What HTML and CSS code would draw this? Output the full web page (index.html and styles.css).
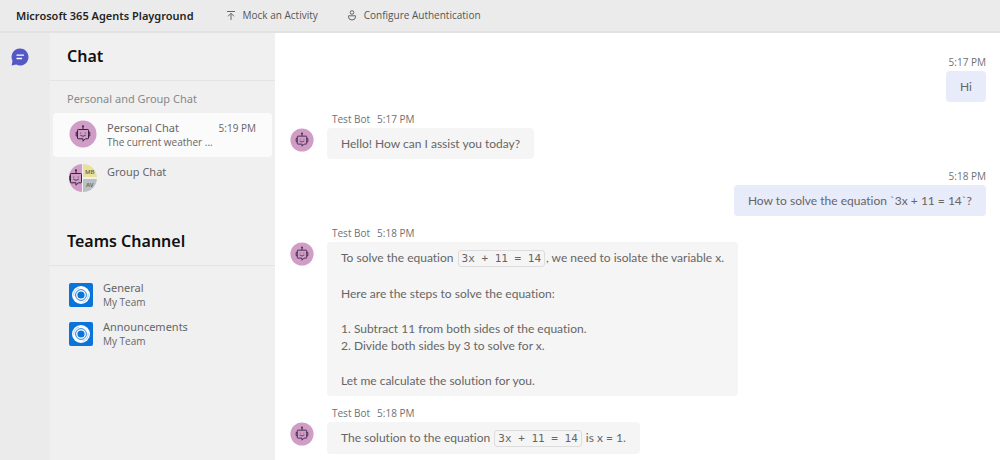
FILE: index.html
```
<!DOCTYPE html>
<html lang="en">
<head>
<meta charset="utf-8">
<meta name="viewport" content="width=device-width, initial-scale=1">
<title>Microsoft 365 Agents Playground</title>
<link rel="stylesheet" href="styles.css">
</head>
<body>
<svg width="0" height="0" class="sprite" aria-hidden="true">
  <symbol id="bot" viewBox="0 0 28 28">
    <circle cx="14" cy="14" r="13.5" fill="#cf9dc6"/>
    <g fill="none" stroke="#3a2240" stroke-width="1">
      <path d="M9.2 9.5h9.6q.7 0 .7.7v7.9q0 .7-.7.7h-2.4L14 21.2v-2.4H9.2q-.7 0-.7-.7v-7.9q0-.7.7-.7z"/>
      <path d="M14 9.4V6.6M8.6 12.2H7.2v3.8h1.4M19.4 12.2h1.4v3.8h-1.4"/>
      <path d="M11.3 15.2q2.7 2.2 5.4 0" stroke-width=".8"/>
    </g>
    <circle cx="14" cy="6.3" r="1" fill="#3a2240"/>
    <circle cx="11.8" cy="12.9" r=".5" fill="#3a2240"/>
    <circle cx="16.2" cy="12.9" r=".5" fill="#3a2240"/>
  </symbol>
  <symbol id="channel" viewBox="0 0 24 24">
    <rect width="24" height="24" rx="2" fill="#0b74da"/>
    <circle cx="12" cy="12" r="9" fill="#fff"/>
    <circle cx="12" cy="12" r="5.4" fill="none" stroke="#0b74da" stroke-width=".9"/>
    <path d="M4.8 13a7.2 7.2 0 0 1 5.2-8M19.2 11a7.2 7.2 0 0 1-5.2 8" fill="none" stroke="#6faeea" stroke-width=".6"/>
    <circle cx="12" cy="12" r="3.6" fill="#0b74da"/>
  </symbol>
</svg>

<header class="topbar">
  <h1 class="brand">Microsoft 365 Agents Playground</h1>
  <button class="action" type="button">
    <svg class="action-icon" viewBox="0 0 12 12" aria-hidden="true"><path d="M2 1.5h8M6 10V3.5M3 6.3l3-3 3 3"/></svg>
    Mock an Activity
  </button>
  <button class="action" type="button">
    <svg class="action-icon" viewBox="0 0 12 12" aria-hidden="true"><circle cx="6" cy="2.5" r="1.8"/><path d="M2.5 5.8h7v1a3.5 3.2 0 0 1-7 0z"/></svg>
    Configure Authentication
  </button>
</header>

<div class="app">
  <nav class="rail" aria-label="Apps">
    <button class="rail-button" type="button" aria-label="Chat">
      <svg class="rail-icon" viewBox="0 0 18 18" aria-hidden="true"><path d="M9 .5a8.5 8.5 0 1 1-3.8 16.1L.6 17.4l.9-4.5A8.5 8.5 0 0 1 9 .5z" fill="#5458c5"/><path d="M6 7.2h6.5M6 10.5h4.5" stroke="#fff" stroke-width="1.3" stroke-linecap="round"/></svg>
    </button>
  </nav>

  <aside class="panel">
    <h2 class="panel-title">Chat</h2>
    <h3 class="panel-label">Personal and Group Chat</h3>
    <ul class="chats">
      <li>
        <button class="chat selected" type="button">
          <svg class="avatar-large" aria-hidden="true"><use href="#bot"/></svg>
          <span class="item-text">
            <span class="item-row"><span class="item-name">Personal Chat</span><time class="item-time">5:19 PM</time></span>
            <span class="item-detail">The current weather ...</span>
          </span>
        </button>
      </li>
      <li>
        <button class="chat" type="button">
          <svg class="avatar-large" viewBox="0 0 28 28" aria-hidden="true">
            <defs>
              <clipPath id="round"><circle cx="14" cy="14" r="14"/></clipPath>
              <clipPath id="left"><path d="M0 0h13v28H0z"/></clipPath>
            </defs>
            <g clip-path="url(#round)">
              <g clip-path="url(#left)">
                <path d="M0 0h13v28H0z" fill="#cf9dc6"/>
                <use href="#bot" x="-7" width="28" height="28"/>
              </g>
              <path d="M14 0h14v13H14z" fill="#ecdf9c"/>
              <path d="M14 15h14v13H14z" fill="#b7c0c7"/>
              <text class="initials" x="16" y="10">MB</text>
              <text class="initials" x="17" y="23">AV</text>
            </g>
          </svg>
          <span class="item-text"><span class="item-name">Group Chat</span></span>
        </button>
      </li>
    </ul>
    <h2 class="panel-title">Teams Channel</h2>
    <ul class="channels">
      <li>
        <button class="channel" type="button">
          <svg class="channel-icon" aria-hidden="true"><use href="#channel"/></svg>
          <span class="item-text"><span class="item-name">General</span><span class="item-detail">My Team</span></span>
        </button>
      </li>
      <li>
        <button class="channel" type="button">
          <svg class="channel-icon" aria-hidden="true"><use href="#channel"/></svg>
          <span class="item-text"><span class="item-name">Announcements</span><span class="item-detail">My Team</span></span>
        </button>
      </li>
    </ul>
  </aside>

  <main class="conversation">
    <article class="message mine">
      <div class="meta"><time>5:17 PM</time></div>
      <div class="bubble"><p>Hi</p></div>
    </article>
    <article class="message">
      <div class="meta"><span>Test Bot</span><time>5:17 PM</time></div>
      <svg class="avatar" aria-hidden="true"><use href="#bot"/></svg>
      <div class="bubble"><p>Hello! How can I assist you today?</p></div>
    </article>
    <article class="message mine">
      <div class="meta"><time>5:18 PM</time></div>
      <div class="bubble"><p>How to solve the equation `3x + 11 = 14`?</p></div>
    </article>
    <article class="message">
      <div class="meta"><span>Test Bot</span><time>5:18 PM</time></div>
      <svg class="avatar" aria-hidden="true"><use href="#bot"/></svg>
      <div class="bubble">
        <p>To solve the equation <code>3x + 11 = 14</code>, we need to isolate the variable x.</p>
        <p>Here are the steps to solve the equation:</p>
        <ol class="steps">
          <li>Subtract 11 from both sides of the equation.</li>
          <li>Divide both sides by 3 to solve for x.</li>
        </ol>
        <p>Let me calculate the solution for you.</p>
      </div>
    </article>
    <article class="message">
      <div class="meta"><span>Test Bot</span><time>5:18 PM</time></div>
      <svg class="avatar" aria-hidden="true"><use href="#bot"/></svg>
      <div class="bubble"><p>The solution to the equation <code>3x + 11 = 14</code> is x = 1.</p></div>
    </article>
  </main>
</div>
</body>
</html>
```
FILE: styles.css
```
* {
  box-sizing: border-box;
}

body {
  display: flex;
  flex-direction: column;
  min-height: 100vh;
  margin: 0;
  background: #fff;
  color: #666;
  font-family: "Noto Sans", "Open Sans", sans-serif;
  font-size: 11px;
  line-height: 17px;
  font-variant-ligatures: none;
}

h1,
h2,
h3,
p,
ul,
ol {
  margin: 0;
  padding: 0;
}

ul,
ol {
  list-style: none;
}

button {
  padding: 0;
  border: 0;
  background: none;
  color: inherit;
  font: inherit;
  text-align: left;
  cursor: pointer;
}

.sprite {
  position: absolute;
}

.topbar {
  display: flex;
  align-items: center;
  gap: 28px;
  padding: 7px 16px;
  border-bottom: 2px solid #e2e2e2;
  background: #ebebeb;
}

.brand {
  margin-right: 3px;
  color: #242424;
  font-size: 11px;
  font-weight: 600;
}

.action {
  display: flex;
  align-items: center;
  gap: 6px;
  color: #555;
  font-family: "Open Sans", "Noto Sans", sans-serif;
  font-size: 10px;
}

.action-icon {
  width: 12px;
  height: 12px;
  fill: none;
  stroke: #666;
}

.app {
  display: flex;
  flex: 1;
}

.rail {
  flex: 0 0 50px;
  padding: 15px 11px;
  background: #ebebeb;
}

.rail-button {
  display: block;
}

.rail-icon {
  display: block;
  width: 18px;
  height: 18px;
}

.panel {
  flex: 0 0 225px;
  background: #f0f0f0;
}

.panel-title {
  padding: 12px 17px;
  border-bottom: 1px solid #e4e4e4;
  color: #111;
  font-size: 16px;
  font-weight: 600;
  line-height: 23px;
}

.panel-label {
  padding: 9px 17px 6px;
  color: #888;
  font-size: 11px;
  font-weight: 400;
}

.chats {
  padding: 0 3px 17px;
}

.chat {
  display: flex;
  gap: 10px;
  width: 100%;
  min-height: 44px;
  padding: 7px 16px;
  border-radius: 4px;
}

.selected {
  background: #fbfbfb;
}

.avatar-large {
  flex: none;
  width: 28px;
  height: 28px;
}

.initials {
  fill: #6b6754;
  font-size: 6px;
  font-weight: 600;
}

.item-text {
  display: flex;
  flex: 1;
  flex-direction: column;
}

.item-row {
  display: flex;
  justify-content: space-between;
}

.item-name {
  font-size: 11px;
  line-height: 16px;
}

.item-time {
  font-family: "Open Sans", "Noto Sans", sans-serif;
  font-size: 10px;
  line-height: 16px;
}

.item-detail {
  font-family: "Open Sans", "Noto Sans", sans-serif;
  font-size: 10px;
  line-height: 13px;
}

.channels {
  display: flex;
  flex-direction: column;
  gap: 10px;
  padding: 14px 19px;
}

.channel {
  display: flex;
  align-items: center;
  gap: 10px;
  width: 100%;
}

.channel-icon {
  flex: none;
  width: 24px;
  height: 24px;
}

.conversation {
  display: flex;
  flex: 1;
  flex-direction: column;
  gap: 8px;
  min-width: 0;
  padding: 20px 14px 8px 15px;
}

.message {
  display: grid;
  grid-template-columns: 24px minmax(0, 1fr);
  column-gap: 13px;
  justify-items: start;
}

.mine {
  grid-template-columns: minmax(0, 1fr);
  justify-items: end;
}

.meta {
  display: flex;
  grid-column: -2;
  gap: 7px;
  padding-left: 5px;
  color: #717171;
  font-family: "Open Sans", "Noto Sans", sans-serif;
  font-size: 10px;
  line-height: 18px;
}

.avatar {
  width: 24px;
  height: 24px;
}

.bubble {
  display: flex;
  flex-direction: column;
  gap: 18px;
  padding: 7px 14px;
  border-radius: 4px;
  background: #f5f5f5;
  font-family: Lato, "Open Sans", sans-serif;
  font-size: 12px;
}

.mine .bubble {
  background: #e8ebfa;
}

.bubble code {
  margin: 0 1px;
  padding: 1px 3px;
  border: 1px solid #dcdcdc;
  border-radius: 3px;
  font-family: "DejaVu Sans Mono", monospace;
  font-size: 11px;
}

.steps {
  list-style: decimal inside;
}
```
